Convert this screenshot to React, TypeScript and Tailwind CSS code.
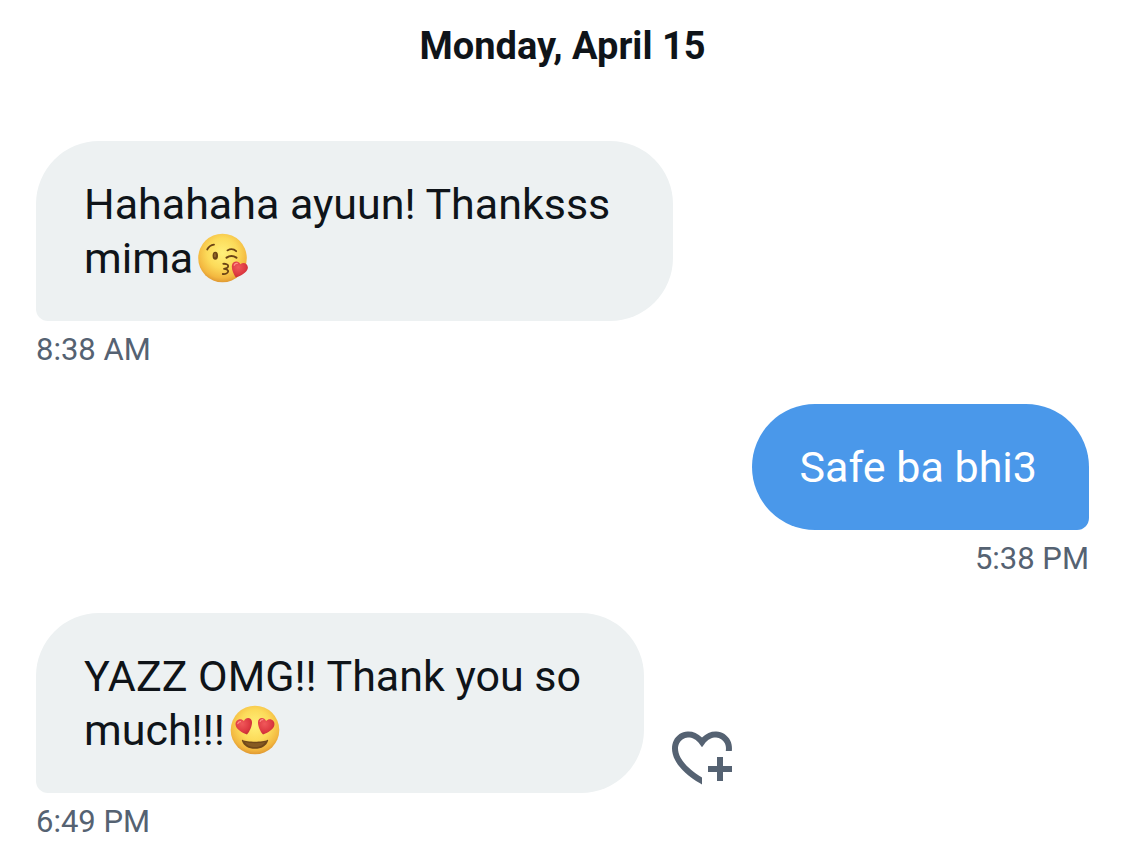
import type { ReactNode } from 'react';
import clsx from 'clsx';

function FaceGradients({ id }: { id: string }) {
  return (
    <defs>
      <radialGradient id={`${id}-face`} cx="0.5" cy="0.4" r="0.62">
        <stop offset="0" stopColor="#fff07a" />
        <stop offset="0.5" stopColor="#fcdb5a" />
        <stop offset="0.82" stopColor="#f3b840" />
        <stop offset="1" stopColor="#dc922f" />
      </radialGradient>
      <radialGradient id={`${id}-heart`} cx="0.4" cy="0.35" r="0.75">
        <stop offset="0" stopColor="#f0585a" />
        <stop offset="0.6" stopColor="#de3a42" />
        <stop offset="1" stopColor="#bf2731" />
      </radialGradient>
    </defs>
  );
}

const emojiClass = 'inline-block h-[50px] w-[50px] ml-[5px] align-[-10px]';

function KissEmoji() {
  return (
    <svg viewBox="0 0 50 50" role="img" aria-label="Face blowing a kiss" className={emojiClass}>
      <FaceGradients id="kiss" />
      <circle cx="24.5" cy="25" r="24.3" fill="url(#kiss-face)" />
      <g fill="none" stroke="#6b4315" strokeLinecap="round" strokeLinejoin="round">
        <path d="M9.2 16.5C10.6 13.8 13 12.1 16 11.7" strokeWidth="1.8" />
        <path d="M29.4 17.4C32.4 15.6 36 16 38.2 18.2" strokeWidth="1.8" />
        <path d="M28.6 24.6C31.6 22.6 35.6 22.8 38.4 24.6" strokeWidth="2.2" />
        <path
          d="M25.2 30.8C27.8 30.6 30.2 31.5 30.2 33C30.2 34.6 28 35.5 26 35.8C28.6 36 30.4 37 30.2 38.4C29.9 40.2 27.4 41.3 24.8 41"
          strokeWidth="1.8"
        />
      </g>
      <ellipse cx="17.3" cy="22.8" rx="2.7" ry="4" fill="#6b4315" />
      <ellipse cx="17" cy="22.3" rx="1.1" ry="2.2" fill="#8d6227" />
      <path
        d="M37.8 44.5C35.6 41 33.4 36.4 33.9 32.6C34.4 28.2 40.2 27 42.4 31.2C45.6 28.2 50.5 30.8 49.8 35.3C49.1 39.4 43 42.9 37.8 44.5Z"
        fill="url(#kiss-heart)"
      />
      <path d="M36.2 32.3C36.7 30.8 38 30.1 39.3 30.4" fill="none" stroke="#ff8f8b" strokeWidth="1.2" strokeLinecap="round" />
    </svg>
  );
}

function HeartEyesEmoji() {
  return (
    <svg viewBox="0 0 50 50" role="img" aria-label="Smiling face with heart eyes" className={emojiClass}>
      <FaceGradients id="eyes" />
      <circle cx="25" cy="25" r="24.3" fill="url(#eyes-face)" />
      <path
        d="M17 29.6C12.3 27.8 6.4 24.6 5.6 20C4.9 15.2 10.4 12.4 13.9 16C15.7 11.6 21.7 12.1 22 16.9C22.2 21.2 19.7 26.2 17 29.6Z"
        fill="url(#eyes-heart)"
      />
      <path
        d="M33 29.6C37.7 27.8 43.6 24.6 44.4 20C45.1 15.2 39.6 12.4 36.1 16C34.3 11.6 28.3 12.1 28 16.9C27.8 21.2 30.3 26.2 33 29.6Z"
        fill="url(#eyes-heart)"
      />
      <path d="M7.8 18.7C8.1 17.3 9.2 16.5 10.5 16.6" fill="none" stroke="#ff8f8b" strokeWidth="1.2" strokeLinecap="round" />
      <path d="M30.2 16.4C30.6 15.2 31.6 14.5 32.8 14.6" fill="none" stroke="#ff8f8b" strokeWidth="1.2" strokeLinecap="round" />
      <path d="M12.8 34.9C17 37.2 33 37.2 37.2 34.9C37.8 34.6 38.3 35 38.1 35.7C36.5 40.9 31.4 43.8 25 43.8C18.6 43.8 13.5 40.9 11.9 35.7C11.7 35 12.2 34.6 12.8 34.9Z" fill="#70481a" />
      <path d="M15 37C20 38.6 30 38.6 35 37C33.6 40.3 29.8 42 25 42C20.2 42 16.4 40.3 15 37Z" fill="#865a22" />
    </svg>
  );
}

function HeartPlusIcon() {
  return (
    <svg viewBox="0 0 24 24" aria-hidden="true" className="h-18 w-18 fill-current">
      <path d="M17 12v3h-2.998v2h3v3h2v-3h3v-2h-3.001v-3H17zm-5 6.839c-3.871-2.34-6.053-4.639-7.127-6.609-1.112-2.04-1.031-3.7-.479-4.82.561-1.13 1.667-1.84 2.91-1.91 1.222-.06 2.68.51 3.892 2.16l.806 1.09.805-1.09c1.211-1.65 2.668-2.22 3.89-2.16 1.242.07 2.347.78 2.908 1.91.334.677.49 1.554.321 2.59h2.011c.153-1.283-.039-2.469-.539-3.48-.887-1.79-2.647-2.91-4.601-3.01-1.65-.09-3.367.56-4.796 2.01-1.43-1.45-3.147-2.1-4.798-2.01-1.954.1-3.714 1.22-4.601 3.01-.896 1.81-.846 4.17.514 6.67 1.353 2.48 4.003 5.12 8.382 7.67l.502.299v-2.32z" />
    </svg>
  );
}

type MessageProps = {
  time: string;
  sent?: boolean;
  action?: ReactNode;
  children: ReactNode;
};

function Message({ time, sent, action, children }: MessageProps) {
  return (
    <li className={clsx('flex flex-col gap-[9px]', sent ? 'items-end' : 'items-start')}>
      <div className="flex items-end gap-[22px]">
        <p
          className={clsx(
            'rounded-[63px] py-9 pr-[52px] pl-12 text-[43px] leading-[54px] whitespace-pre',
            sent ? 'rounded-br-[12px] bg-[#4a98ea] text-white' : 'rounded-bl-[12px] bg-[#edf1f2] text-[#0f1419]'
          )}
        >
          {children}
        </p>
        {action}
      </div>
      <time className="text-[31px] leading-10 text-[#556272]">{time}</time>
    </li>
  );
}

export default function App() {
  return (
    <main className="min-h-screen bg-white px-9 pt-6 font-[Roboto,'Liberation_Sans',sans-serif]">
      <h1 className="text-center text-[38px] leading-[45px] font-bold text-[#0f1419]">Monday, April 15</h1>
      <ul className="mt-18 flex flex-col gap-[34px]">
        <Message time="8:38 AM">
          {'Hahahaha ayuun! Thanksss \nmima'}
          <KissEmoji />
        </Message>
        <Message time="5:38 PM" sent>
          Safe ba bhi3
        </Message>
        <Message
          time="6:49 PM"
          action={
            <button type="button" aria-label="Add reaction" className="cursor-pointer text-[#556272]">
              <HeartPlusIcon />
            </button>
          }
        >
          {'YAZZ OMG!! Thank you so \nmuch!!!'}
          <HeartEyesEmoji />
        </Message>
      </ul>
    </main>
  );
}
